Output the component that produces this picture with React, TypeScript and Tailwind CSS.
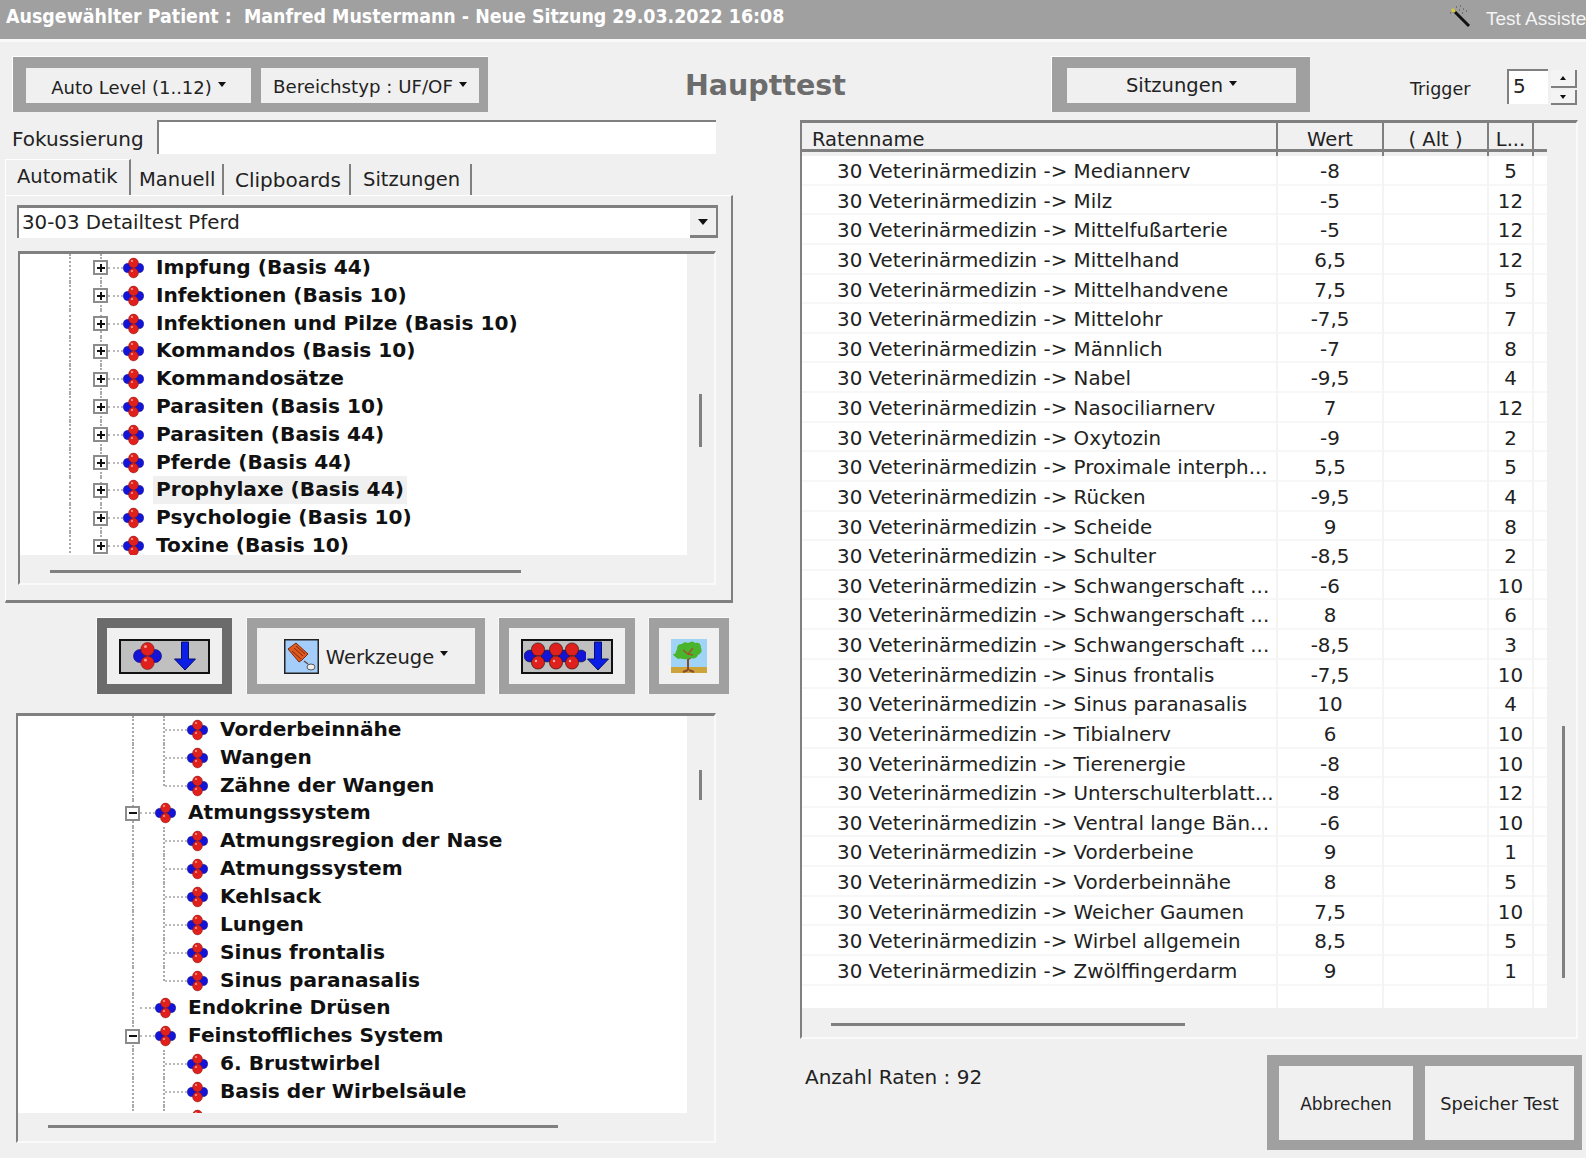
import { ReactNode } from "react";

const rates: [string, string, string][] = [
  ["Mediannerv", "-8", "5"],
  ["Milz", "-5", "12"],
  ["Mittelfußarterie", "-5", "12"],
  ["Mittelhand", "6,5", "12"],
  ["Mittelhandvene", "7,5", "5"],
  ["Mittelohr", "-7,5", "7"],
  ["Männlich", "-7", "8"],
  ["Nabel", "-9,5", "4"],
  ["Nasociliarnerv", "7", "12"],
  ["Oxytozin", "-9", "2"],
  ["Proximale interph...", "5,5", "5"],
  ["Rücken", "-9,5", "4"],
  ["Scheide", "9", "8"],
  ["Schulter", "-8,5", "2"],
  ["Schwangerschaft ...", "-6", "10"],
  ["Schwangerschaft ...", "8", "6"],
  ["Schwangerschaft ...", "-8,5", "3"],
  ["Sinus frontalis", "-7,5", "10"],
  ["Sinus paranasalis", "10", "4"],
  ["Tibialnerv", "6", "10"],
  ["Tierenergie", "-8", "10"],
  ["Unterschulterblatt...", "-8", "12"],
  ["Ventral lange Bän...", "-6", "10"],
  ["Vorderbeine", "9", "1"],
  ["Vorderbeinnähe", "8", "5"],
  ["Weicher Gaumen", "7,5", "10"],
  ["Wirbel allgemein", "8,5", "5"],
  ["Zwölffingerdarm", "9", "1"],
];

const topTree = [
  "Impfung (Basis 44)",
  "Infektionen (Basis 10)",
  "Infektionen und Pilze (Basis 10)",
  "Kommandos (Basis 10)",
  "Kommandosätze",
  "Parasiten (Basis 10)",
  "Parasiten (Basis 44)",
  "Pferde (Basis 44)",
  "Prophylaxe (Basis 44)",
  "Psychologie (Basis 10)",
  "Toxine (Basis 10)",
];

type Node = { label: string; level: 1 | 2; minus?: boolean; last?: boolean };

const bottomTree: Node[] = [
  { label: "Vorderbeinnähe", level: 2 },
  { label: "Wangen", level: 2 },
  { label: "Zähne der Wangen", level: 2, last: true },
  { label: "Atmungssystem", level: 1, minus: true },
  { label: "Atmungsregion der Nase", level: 2 },
  { label: "Atmungssystem", level: 2 },
  { label: "Kehlsack", level: 2 },
  { label: "Lungen", level: 2 },
  { label: "Sinus frontalis", level: 2 },
  { label: "Sinus paranasalis", level: 2, last: true },
  { label: "Endokrine Drüsen", level: 1 },
  { label: "Feinstoffliches System", level: 1, minus: true },
  { label: "6. Brustwirbel", level: 2 },
  { label: "Basis der Wirbelsäule", level: 2 },
  { label: "", level: 2 },
];

function Caret() {
  return <span className="inline-block ml-[6px] mb-[5px] border-x-[4px] border-t-[5px] border-x-transparent border-t-[#111]" />;
}

function Atom({ className = "w-[21px] h-[22px]" }: { className?: string }) {
  return (
    <svg viewBox="0 0 21 22" className={`shrink-0 ${className}`}>
      <circle cx="5" cy="11" r="4.8" fill="#1414d8" stroke="#0a0a60" strokeWidth="0.4" />
      <circle cx="16" cy="11" r="4.8" fill="#1414d8" stroke="#0a0a60" strokeWidth="0.4" />
      <circle cx="10.5" cy="6" r="4.9" fill="#e0201c" stroke="#6a1010" strokeWidth="0.4" />
      <circle cx="10.5" cy="16" r="4.9" fill="#e0201c" stroke="#6a1010" strokeWidth="0.4" />
      <circle cx="9" cy="4" r="1.1" fill="#ff9a90" />
      <circle cx="9" cy="14" r="1.1" fill="#ff9a90" />
    </svg>
  );
}

function ArrowDown() {
  return (
    <svg viewBox="0 0 24 30" className="w-[24px] h-[30px] shrink-0">
      <path d="M8.5 1h7v17h7L12 29 1.5 18h7z" fill="#0a1ee6" stroke="#08106a" strokeWidth="1" />
    </svg>
  );
}

function ExpanderBox({ minus }: { minus?: boolean }) {
  return (
    <span className="relative z-10 w-[15px] h-[15px] bg-white border-2 border-[#8c8c8c] flex items-center justify-center">
      <span className="absolute w-[8px] h-[2px] bg-[#111]" />
      {!minus && <span className="absolute w-[2px] h-[8px] bg-[#111]" />}
    </span>
  );
}

function TreeText({ children, highlight }: { children: ReactNode; highlight?: boolean }) {
  return (
    <span className={`ml-[9px] px-[3px] h-[28px] leading-[27px] whitespace-nowrap text-[20.15px] font-bold text-[#111] ${highlight ? "bg-[#f0f0f0]" : ""}`}>
      {children}
    </span>
  );
}

function TopRow({ label }: { label: string }) {
  return (
    <div className="flex items-center h-[27.82px]">
      <span className="w-[49px] shrink-0" />
      <span className="w-[24px] self-stretch border-l-2 border-dotted border-[#aaa] shrink-0" />
      <span className="relative w-[15px] self-stretch flex items-center justify-center shrink-0">
        <span className="absolute inset-y-0 left-[7px] border-l-2 border-dotted border-[#aaa]" />
        <ExpanderBox />
      </span>
      <span className="w-[15px] border-t-2 border-dotted border-[#bbb] shrink-0" />
      <Atom />
      <TreeText highlight={label.startsWith("Prophylaxe")}>{label}</TreeText>
    </div>
  );
}

function BottomRow({ node }: { node: Node }) {
  return (
    <div className="flex items-center h-[27.85px]">
      <span className="w-[107px] shrink-0" />
      <span className="relative w-[15px] self-stretch flex items-center justify-center shrink-0">
        <span className="absolute inset-y-0 left-[7px] border-l-2 border-dotted border-[#aaa]" />
        {node.minus && <ExpanderBox minus />}
      </span>
      {node.level === 1 ? (
        <>
          <span className="w-[15px] border-t-2 border-dotted border-[#bbb] shrink-0" />
          <Atom />
          <TreeText>{node.label}</TreeText>
        </>
      ) : (
        <>
          <span className="w-[25px] shrink-0 self-stretch relative">
            <span className={`absolute top-0 right-0 border-l-2 border-dotted border-[#aaa] ${node.last ? "h-1/2" : "h-full"}`} />
          </span>
          <span className="w-[22px] border-t-2 border-dotted border-[#bbb] shrink-0" />
          <Atom />
          <TreeText>{node.label}</TreeText>
        </>
      )}
    </div>
  );
}

function GroupButton({ children, className }: { children: ReactNode; className: string }) {
  return <div className={`bg-[#f0f0f0] flex items-center justify-center whitespace-nowrap text-[#222] ${className}`}>{children}</div>;
}

function TreeIcon() {
  return (
    <svg viewBox="0 0 36 34" className="w-[36px] h-[34px]">
      <rect width="36" height="34" fill="#9fd4f7" />
      <rect y="28" width="36" height="6" fill="#cda43a" />
      <path d="M17 31V17l-5-5M18 20l6-7M17 31l-5 2M18 31l5 2" stroke="#8a4b2a" strokeWidth="2" fill="none" />
      <path d="M6 10q0-5 5-5 2-3 6-1 5-3 7 0 6-1 6 5 2 5-3 7-2 5-8 3-3 2-7 1-3-1-5 0-8-6-3-5z" fill="#4ab52c" />
      <path d="M12 11l5 4 5-6M17 15l5 1" stroke="#a0522d" strokeWidth="1.4" fill="none" />
    </svg>
  );
}

function ToolIcon() {
  return (
    <svg viewBox="0 0 35 35" className="w-[35px] h-[35px] shrink-0">
      <rect x="0.75" y="0.75" width="33.5" height="33.5" fill="#a4cdfa" stroke="#222" strokeWidth="1.5" />
      <path d="M4 10l8-6 12 11-3 3-3 3-3 2z" fill="#e0591e" stroke="#7a2a10" strokeWidth="1" />
      <path d="M10 9l9 8M8 12l9 8M12 7l9 8" stroke="#7a2a10" strokeWidth="1" />
      <path d="M20 22l4 3" stroke="#555" strokeWidth="1.5" />
      <ellipse cx="27" cy="28" rx="4" ry="3" fill="#eee" stroke="#555" strokeWidth="1" />
    </svg>
  );
}

function Wand() {
  return (
    <svg viewBox="0 0 24 24" className="w-[24px] h-[24px]">
      <path d="M6 7l15 15" stroke="#111" strokeWidth="3" />
      <path d="M4 5l3 3" stroke="#d8c840" strokeWidth="3" />
      <path d="M8 3h1M12 2h1M15 5h1M18 7h1M11 6h1M14 9h1M2 9h1" stroke="#444" strokeWidth="1" />
    </svg>
  );
}

export default function App() {
  return (
    <div className="w-[1586px] h-[1158px] overflow-hidden bg-[#f0f0f0] font-['DejaVu_Sans',sans-serif] text-[#222]">
      <div className="h-[42px] bg-[#a0a0a0] border-b-[3px] border-[#fafafa] flex items-center pl-[6px] pr-0 text-white">
        <span className="font-['DejaVu_Sans_Condensed','DejaVu_Sans',sans-serif] font-bold text-[19.4px] whitespace-pre -mt-[5px]">
          Ausgewählter Patient :  Manfred Mustermann - Neue Sitzung 29.03.2022 16:08
        </span>
        <span className="ml-auto mr-[7px] -mt-[7px]">
          <Wand />
        </span>
        <span className="w-[107px] whitespace-nowrap text-[19px] text-[#f4f4f4] font-['Liberation_Sans',sans-serif] pl-[7px] -mt-[1px]">Test Assiste</span>
      </div>

      <div className="flex mt-[14px] pl-[12px] h-[56px]">
        <div className="w-[476px] bg-[#a0a0a0] flex gap-[10px] pl-[13px] pt-[11px] pb-[9px] border-t border-l border-white">
          <GroupButton className="w-[225px] text-[18px] pt-[3px]">Auto Level (1..12)<Caret /></GroupButton>
          <GroupButton className="w-[218px] text-[18.2px] pt-[3px]">Bereichstyp : UF/OF<Caret /></GroupButton>
        </div>
        <div className="ml-[197px] w-[366px] font-bold text-[28.5px] text-[#6c6c6c] leading-[60px]">Haupttest</div>
        <div className="w-[259px] bg-[#a0a0a0] pl-[15px] pr-[14px] pt-[11px] pb-[9px] flex border-t border-l border-white">
          <GroupButton className="flex-1 text-[19.5px] pt-[1px]">Sitzungen<Caret /></GroupButton>
        </div>
        <div className="ml-[100px] w-[97px] text-[17.5px] leading-[66px]">Trigger</div>
        <div className="mt-[13px] w-[41px] h-[35px] bg-white border-t-[2px] border-l-[2px] border-[#808080] text-[20px] pl-[4px] leading-[31px]">5</div>
        <div className="ml-[3px] mt-[14px] w-[26px] flex flex-col gap-[2px]">
          <div className="h-[18px] bg-[#f4f4f4] border-r-2 border-b-2 border-[#808080] flex items-center justify-center">
            <span className="border-x-[3px] border-b-[4px] border-x-transparent border-b-[#111]" />
          </div>
          <div className="h-[15px] bg-[#f4f4f4] border-r-2 border-b-2 border-[#808080] flex items-center justify-center">
            <span className="border-x-[3px] border-t-[4px] border-x-transparent border-t-[#111]" />
          </div>
        </div>
      </div>

      <div className="flex mt-[8px]">
        <div className="w-[800px] shrink-0">
          <div className="flex items-center h-[34px] pl-[12px]">
            <span className="w-[145px] text-[20px] pt-[3px]">Fokussierung</span>
            <div className="w-[559px] h-[34px] bg-white border-t-[2px] border-l-[2px] border-[#808080]" />
          </div>

          <div className="flex items-end h-[41px] ml-[5px] text-[19.5px]">
            <div className="w-[126px] h-[36px] border-t border-l border-white border-r-2 border-r-[#808080] pl-[11px] leading-[34px]">Automatik</div>
            <div className="w-[91px] h-[31px] ml-[2px] border-r-2 border-[#808080] pl-[6px] leading-[32px]">Manuell</div>
            <div className="w-[125px] h-[31px] ml-[2px] border-r-2 border-[#808080] pl-[9px] leading-[32px] text-[20px]">Clipboards</div>
            <div className="w-[119px] h-[31px] ml-[2px] border-r-2 border-[#808080] pl-[10px] leading-[32px]">Sitzungen</div>
          </div>

          <div className="ml-[5px] w-[728px] h-[408px] border-t border-l border-white border-r-[2px] border-b-[3px] border-r-[#808080] border-b-[#808080]">
            <div className="ml-[11px] mt-[9px] w-[701px] h-[33px] bg-white border-t-[3px] border-l-[2px] border-[#808080] flex items-center justify-between text-[19.8px] pl-[3px]">
              30-03 Detailtest Pferd
              <div className="w-[28px] h-[30px] bg-[#f0f0f0] border-r-2 border-b-[3px] border-[#808080] flex items-center justify-center">
                <span className="border-x-[5px] border-t-[6px] border-x-transparent border-t-[#111]" />
              </div>
            </div>

            <div className="ml-[12px] mt-[13px] w-[698px] h-[334px] border-t-[3px] border-l-[2px] border-[#808080] border-r-2 border-r-[#fafafa] border-b-2 border-b-[#fafafa]">
              <div className="flex">
                <div className="w-[667px] h-[301px] bg-white overflow-hidden">
                  {topTree.map((label) => (
                    <TopRow key={label} label={label} />
                  ))}
                </div>
                <div className="ml-[12px] mt-[140px] w-[3px] h-[53px] bg-[#808080]" />
              </div>
              <div className="ml-[30px] mt-[15px] w-[471px] h-[3px] bg-[#808080]" />
            </div>
          </div>

          <div className="flex ml-[96px] mt-[14px] h-[77px]">
            <div className="w-[136px] bg-[#6b6b6b] p-[10px] border-t border-l border-[#fafafa] flex">
              <GroupButton className="flex-1">
                <div className="w-[91px] h-[35px] bg-[#c0c0c0] border-2 border-[#111] flex items-center justify-center gap-[11px]">
                  <Atom className="w-[29px] h-[30px]" />
                  <ArrowDown />
                </div>
              </GroupButton>
            </div>
            <div className="ml-[14px] w-[239px] bg-[#a0a0a0] p-[10px] border-t border-l border-[#fafafa] flex">
              <GroupButton className="flex-1 text-[19.5px]">
                <ToolIcon />
                <span className="ml-[7px] pt-[3px]">Werkzeuge</span>
                <Caret />
              </GroupButton>
            </div>
            <div className="ml-[13px] w-[137px] bg-[#a0a0a0] p-[10px] border-t border-l border-[#fafafa] flex">
              <GroupButton className="flex-1">
                <div className="w-[92px] h-[35px] bg-[#c0c0c0] border-2 border-[#111] flex items-center justify-center">
                  <svg viewBox="0 0 62 28" className="w-[62px] h-[28px] shrink-0">
                    {[6, 23, 40, 57].map((x) => (
                      <circle key={x} cx={x} cy="14" r="6" fill="#1414d8" stroke="#111" strokeWidth="0.6" />
                    ))}
                    {[14, 32, 48].flatMap((x) => [
                      <circle key={`t${x}`} cx={x} cy="7.5" r="6.6" fill="#e0201c" stroke="#111" strokeWidth="0.6" />,
                      <circle key={`b${x}`} cx={x} cy="20.5" r="6.6" fill="#e0201c" stroke="#111" strokeWidth="0.6" />,
                      <circle key={`h${x}`} cx={x - 2} cy="19" r="1.2" fill="#ffb0a8" />,
                    ])}
                  </svg>
                  <ArrowDown />
                </div>
              </GroupButton>
            </div>
            <div className="ml-[13px] w-[81px] bg-[#a0a0a0] p-[10px] border-t border-l border-[#fafafa] flex">
              <GroupButton className="flex-1">
                <TreeIcon />
              </GroupButton>
            </div>
          </div>

          <div className="ml-[16px] mt-[19px] w-[700px] h-[430px] border-t-[3px] border-l-[2px] border-[#808080] border-r-2 border-r-[#fafafa] border-b-2 border-b-[#fafafa]">
            <div className="flex">
              <div className="w-[669px] h-[397px] bg-white overflow-hidden">
                {bottomTree.map((node, i) => (
                  <BottomRow key={i} node={node} />
                ))}
              </div>
              <div className="ml-[12px] mt-[54px] w-[3px] h-[30px] bg-[#808080]" />
            </div>
            <div className="ml-[30px] mt-[12px] w-[510px] h-[3px] bg-[#808080]" />
          </div>
        </div>

        <div className="w-[786px] shrink-0">
          <div className="w-[778px] h-[919px] border-t-[3px] border-l-[2px] border-[#808080] border-r-2 border-r-[#fafafa] border-b-2 border-b-[#fafafa]">
            <div className="flex">
              <div className="w-[745px] shrink-0">
                <div className="grid grid-cols-[476px_106px_105px_45px_13px] h-[29px] border-b-[3px] border-[#808080] text-[19.5px] leading-[34px]">
                  <div className="border-r-2 border-[#808080] pl-[10px]">Ratenname</div>
                  <div className="border-r-2 border-[#808080] text-center">Wert</div>
                  <div className="border-r-2 border-[#808080] text-center">( Alt )</div>
                  <div className="border-r-2 border-[#808080] text-center">L...</div>
                  <div />
                </div>
                <div className="h-[852px] mt-[4px] bg-white overflow-hidden flex flex-col text-[19.85px]">
                  {rates.map(([name, value, level], i) => (
                    <div key={i} className="grid grid-cols-[476px_106px_105px_45px_13px] h-[29.63px] shrink-0 border-b-2 border-[#f7f7f7] leading-[32px]">
                      <div className="border-r-2 border-[#f4f4f4] pl-[35px] whitespace-nowrap overflow-hidden">30 Veterinärmedizin -&gt; {name}</div>
                      <div className="border-r-2 border-[#f4f4f4] text-center">{value}</div>
                      <div className="border-r-2 border-[#f4f4f4]" />
                      <div className="border-r-2 border-[#f4f4f4] text-center">{level}</div>
                      <div />
                    </div>
                  ))}
                  <div className="grid grid-cols-[476px_106px_105px_45px_13px] flex-1">
                    <div className="border-r-2 border-[#f4f4f4]" />
                    <div className="border-r-2 border-[#f4f4f4]" />
                    <div className="border-r-2 border-[#f4f4f4]" />
                    <div className="border-r-2 border-[#f4f4f4]" />
                    <div />
                  </div>
                </div>
              </div>
              <div className="ml-[15px] mt-[603px] w-[3px] h-[252px] bg-[#808080]" />
            </div>
            <div className="ml-[29px] mt-[15px] w-[354px] h-[3px] bg-[#808080]" />
          </div>

          <div className="flex mt-[16px]">
            <div className="w-[467px] pl-[5px] pt-[7px] text-[20px]">Anzahl Raten : 92</div>
            <div className="w-[315px] h-[95px] bg-[#a0a0a0] flex gap-[12px] pl-[12px] pt-[11px] pb-[10px] text-[17px]">
              <GroupButton className="w-[134px] pt-[3px]">Abbrechen</GroupButton>
              <GroupButton className="w-[149px] pt-[3px] text-[17.8px]">Speicher Test</GroupButton>
            </div>
          </div>
        </div>
      </div>
    </div>
  );
}
